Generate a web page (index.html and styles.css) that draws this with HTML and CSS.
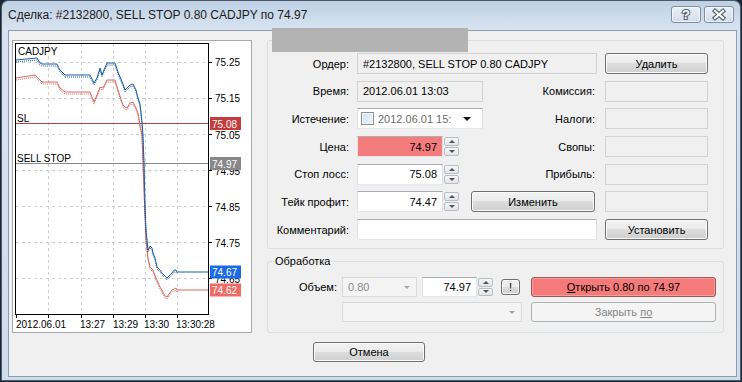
FILE: index.html
```html
<!DOCTYPE html>
<html lang="ru">
<head>
    <meta charset="UTF-8">
    <title>Сделка: #2132800</title>
    <link rel="stylesheet" href="styles.css">
</head>
<body>
<div class="window">
    <div class="titlebar">
        <span class="title">Сделка: #2132800, SELL STOP 0.80 CADJPY по 74.97</span>
        <div class="caption-btns">
            <span class="cap-btn">
                <svg width="28" height="15" viewBox="0 0 28 15">
                    <text x="14" y="12" text-anchor="middle" font-family="Liberation Sans, Arial, sans-serif" font-size="13" font-weight="bold" fill="#fff" stroke="#55626f" stroke-width="2.2" paint-order="stroke">?</text>
                </svg>
            </span>
            <span class="cap-btn">
                <svg width="28" height="15" viewBox="0 0 28 15">
                    <path d="M10 4 L18 11 M18 4 L10 11" stroke="#55626f" stroke-width="4.4" stroke-linecap="square"/>
                    <path d="M10 4 L18 11 M18 4 L10 11" stroke="#fff" stroke-width="2.2" stroke-linecap="square"/>
                </svg>
            </span>
        </div>
    </div>

    <div class="client">
        <div class="top-row">
            <!-- график -->
            <div class="chart">
                <svg width="238" height="291" viewBox="13 41 238 291" font-family="Liberation Sans, Arial, sans-serif" font-size="10">
                    <g stroke="#cfcfcf" stroke-dasharray="3 3" shape-rendering="crispEdges">
                        <line x1="16" y1="62.5" x2="208" y2="62.5"/>
                        <line x1="16" y1="98.5" x2="208" y2="98.5"/>
                        <line x1="16" y1="134.5" x2="208" y2="134.5"/>
                        <line x1="16" y1="170.5" x2="208" y2="170.5"/>
                        <line x1="16" y1="206.5" x2="208" y2="206.5"/>
                        <line x1="16" y1="242.5" x2="208" y2="242.5"/>
                        <line x1="16" y1="278.5" x2="208" y2="278.5"/>
                        <line x1="48.5" y1="44" x2="48.5" y2="314"/>
                        <line x1="81.5" y1="44" x2="81.5" y2="314"/>
                        <line x1="113.5" y1="44" x2="113.5" y2="314"/>
                        <line x1="145.5" y1="44" x2="145.5" y2="314"/>
                        <line x1="177.5" y1="44" x2="177.5" y2="314"/>
                    </g>
                    <g shape-rendering="crispEdges">
                        <line x1="16" y1="123.5" x2="208" y2="123.5" stroke="#a84848"/>
                        <line x1="16" y1="163.5" x2="208" y2="163.5" stroke="#8a8a8a"/>
                    </g>
                    <g fill="none">
                        <polyline stroke="#d66a62" points="16,78 35,75 40,80 42,82 57,82 60,88 65,92 90,92 92,97 94,102 97,95 100,87 103,88 107,80 115,80 118,90 123,105 125,107 127,108 130,103 133,102 136,108 138,113 140,125 142,135 143,163 145,215 146,240 148,258 150,267 153,270 156,278 160,287 163,292 165,296 167,297 169,294 172,290 174,289 176,288 177,290 208,290"/>
                        <polyline stroke="#d66a62" stroke-dasharray="1 1" transform="translate(0 2)" points="16,78 35,75 40,80 42,82 57,82 60,88 65,92 90,92 92,97 94,102 97,95 100,87 103,88 107,80 115,80 118,90 123,105 125,107 127,108 130,103 133,102 136,108 138,113 140,125 142,135 143,163 145,215 146,240 148,258 150,267 153,270 156,278 160,287 163,292 165,296 167,297 169,294 172,290 174,289 176,288 177,290"/>
                        <polyline stroke="#1d5ea8" points="16,60 37,58 40,63 42,64 57,64 60,70 65,75 90,75 92,79 94,83 97,78 100,68 102,75 104,70 107,63 115,63 118,72 123,84 125,90 127,88 130,85 133,84 136,90 138,98 140,104 142,122 143,137 144,163 145,207 146,230 148,250 150,246 152,248 153,253 155,258 157,267 160,270 162,273 165,276 167,278 169,276 172,273 174,270 176,270 177,272 208,272"/>
                        <polyline stroke="#1d5ea8" stroke-dasharray="1 1" transform="translate(0 2)" points="16,60 37,58 40,63 42,64 57,64 60,70 65,75 90,75 92,79 94,83 97,78 100,68 102,75 104,70 107,63 115,63 118,72 123,84 125,90 127,88 130,85 133,84 136,90 138,98 140,104 142,122 143,137 144,163 145,207 146,230 148,250 150,246 152,248 153,253 155,258 157,267 160,270 162,273 165,276 167,278 169,276 172,273 174,270 176,270 177,272"/>
                    </g>
                    <rect x="15.5" y="43.5" width="193" height="271" fill="none" stroke="#000" shape-rendering="crispEdges"/>
                    <g stroke="#000" shape-rendering="crispEdges">
                        <line x1="208" y1="62.5" x2="212" y2="62.5"/>
                        <line x1="208" y1="98.5" x2="212" y2="98.5"/>
                        <line x1="208" y1="134.5" x2="212" y2="134.5"/>
                        <line x1="208" y1="170.5" x2="212" y2="170.5"/>
                        <line x1="208" y1="206.5" x2="212" y2="206.5"/>
                        <line x1="208" y1="242.5" x2="212" y2="242.5"/>
                        <line x1="208" y1="278.5" x2="212" y2="278.5"/>
                        <line x1="16.5" y1="314" x2="16.5" y2="318"/>
                        <line x1="48.5" y1="314" x2="48.5" y2="318"/>
                        <line x1="81.5" y1="314" x2="81.5" y2="318"/>
                        <line x1="113.5" y1="314" x2="113.5" y2="318"/>
                        <line x1="145.5" y1="314" x2="145.5" y2="318"/>
                        <line x1="177.5" y1="314" x2="177.5" y2="318"/>
                    </g>
                    <g fill="#000">
                        <text x="18" y="55">CADJPY</text>
                        <text x="17" y="122">SL</text>
                        <text x="17" y="162">SELL STOP</text>
                        <text x="215" y="66">75.25</text>
                        <text x="215" y="102">75.15</text>
                        <text x="215" y="138.5">75.05</text>
                        <text x="215" y="174.5">74.95</text>
                        <text x="215" y="210.5">74.85</text>
                        <text x="215" y="246.5">74.75</text>
                        <text x="215" y="282.5">74.65</text>
                        <text x="16" y="328">2012.06.01</text>
                        <text x="80" y="328">13:27</text>
                        <text x="113" y="328">13:29</text>
                        <text x="144" y="328">13:30</text>
                        <text x="176" y="328">13:30:28</text>
                    </g>
                    <rect x="210" y="117" width="31" height="13" fill="#c63b3b"/>
                    <text x="212" y="127.5" fill="#fff">75.08</text>
                    <rect x="210" y="157" width="31" height="13" fill="#878787"/>
                    <text x="212" y="167.5" fill="#fff">74.97</text>
                    <rect x="210" y="265.5" width="31" height="13" fill="#1a6be6"/>
                    <text x="212" y="276" fill="#fff">74.67</text>
                    <rect x="210" y="283.5" width="31" height="13" fill="#f06a66"/>
                    <text x="212" y="294" fill="#fff">74.62</text>
                </svg>
            </div>

            <div class="groups">
                <div class="group">
                    <div class="redacted"></div>
                    <div class="form-grid">
                        <span class="lbl">Ордер:</span>
                        <div class="field">#2132800, SELL STOP 0.80 CADJPY</div>
                        <button class="btn">Удалить</button>

                        <span class="lbl">Время:</span>
                        <div class="cell">
                            <div class="field w-short">2012.06.01 13:03</div>
                            <span class="side-lbl">Комиссия:</span>
                        </div>
                        <div class="field"></div>

                        <span class="lbl">Истечение:</span>
                        <div class="cell">
                            <div class="datepick">
                                <span class="chk"></span>
                                <span class="date-text">2012.06.01 15:</span>
                                <span class="drop-arrow"></span>
                            </div>
                            <span class="side-lbl">Налоги:</span>
                        </div>
                        <div class="field"></div>

                        <span class="lbl">Цена:</span>
                        <div class="cell">
                            <div class="spin-field">
                                <div class="field edit price">74.97</div>
                                <div class="spinner"><span class="up"></span><span class="down"></span></div>
                            </div>
                            <span class="side-lbl">Свопы:</span>
                        </div>
                        <div class="field"></div>

                        <span class="lbl">Стоп лосс:</span>
                        <div class="cell">
                            <div class="spin-field">
                                <div class="field edit">75.08</div>
                                <div class="spinner"><span class="up"></span><span class="down"></span></div>
                            </div>
                            <span class="side-lbl">Прибыль:</span>
                        </div>
                        <div class="field"></div>

                        <span class="lbl">Тейк профит:</span>
                        <div class="cell">
                            <div class="spin-field">
                                <div class="field edit">74.47</div>
                                <div class="spinner"><span class="up"></span><span class="down"></span></div>
                            </div>
                            <button class="btn btn-modify">Изменить</button>
                        </div>
                        <div class="field"></div>

                        <span class="lbl">Комментарий:</span>
                        <div class="field edit"></div>
                        <button class="btn">Установить</button>
                    </div>
                </div>

                <fieldset class="proc">
                    <legend>Обработка</legend>
                    <div class="proc-grid">
                        <span class="lbl">Объем:</span>
                        <div class="cell">
                            <div class="combo w-vol"><span>0.80</span><span class="combo-arrow"></span></div>
                            <div class="spin-field small">
                                <div class="field edit">74.97</div>
                                <div class="spinner"><span class="up"></span><span class="down"></span></div>
                            </div>
                            <button class="btn btn-bang">!</button>
                        </div>
                        <button class="btn btn-open"><u>О</u>ткрыть 0.80 по 74.97</button>

                        <span></span>
                        <div class="combo"><span></span><span class="combo-arrow"></span></div>
                        <button class="btn btn-wide" disabled>Закрыть <u>по</u></button>
                    </div>
                </fieldset>
            </div>
        </div>

        <div class="bottom-row">
            <button class="btn btn-cancel">Отмена</button>
        </div>
    </div>
</div>
</body>
</html>
```

FILE: styles.css
```css
* {
    box-sizing: border-box;
}
body {
    margin: 0;
    width: 742px;
    height: 382px;
    overflow: hidden;
    background: #1d2835;
    font-family: "Liberation Sans", Arial, sans-serif;
    font-size: 11px;
    color: #000;
}

/* Окно */
.window {
    margin: 1px 0 0 2px;
    width: 738px;
    height: 379px;
    border-radius: 6px 6px 0 0;
    background: linear-gradient(#bfd0e5, #d7e3f1 28px, #cfdcec);
    box-shadow: 0 0 0 1px #4d5a69;
}
.titlebar {
    height: 29px;
    display: flex;
    justify-content: space-between;
    align-items: flex-start;
    padding: 0 6px;
}
.title {
    margin-top: 7px;
    font-size: 12px;
    line-height: 15px;
    color: #1b1b1b;
}
.caption-btns {
    display: flex;
    gap: 3px;
    margin-top: 5px;
}
.cap-btn {
    width: 30px;
    height: 17px;
    border: 1px solid #7f8fa3;
    border-radius: 3px;
    background: linear-gradient(#eaf0f7, #d2dcea);
    box-shadow: inset 0 0 0 1px rgba(255, 255, 255, 0.6);
    display: flex;
    align-items: center;
    justify-content: center;
}
.cap-btn svg {
    display: block;
}

.client {
    margin: 0 3px 0 6px;
    height: 347px;
    border: 1px solid #8d9db1;
    background: #f0f0f0;
    padding: 9px 0 0 3px;
}
.top-row {
    display: flex;
    gap: 15px;
    height: 293px;
}

/* График */
.chart {
    width: 240px;
    height: 293px;
    background: #fff;
    border: 1px solid #a8a8a8;
}
.chart svg {
    display: block;
}

/* Группы */
.groups {
    width: 457px;
    display: flex;
    flex-direction: column;
}
.group {
    position: relative;
    height: 209px;
    border: 1px solid #d5dfe5;
    border-radius: 3px;
    padding-top: 12px;
}
.redacted {
    position: absolute;
    left: 4px;
    top: -13px;
    width: 196px;
    height: 24px;
    background: #b3b3b3;
}
.form-grid {
    display: grid;
    grid-template-columns: 81px 240px 103px;
    grid-auto-rows: 21px;
    column-gap: 8px;
    row-gap: 6.7px;
}
.lbl {
    align-self: center;
    text-align: right;
    white-space: nowrap;
}
.cell {
    display: flex;
    align-items: center;
}
.side-lbl {
    flex: 1;
    text-align: right;
    padding-right: 2px;
}

.field {
    height: 21px;
    border: 1px solid #d3d3d3;
    background: #f0f0f0;
    padding: 0 5px;
    display: flex;
    align-items: center;
    white-space: nowrap;
    overflow: hidden;
}
.field.edit {
    background: #fff;
    border-color: #abadb3 #dbdfe6 #e3e9ef #e2e3ea;
    justify-content: flex-end;
}
.field.price {
    background: #f47c7c;
}
.w-short {
    width: 126px;
}

.datepick {
    width: 126px;
    height: 21px;
    display: flex;
    align-items: center;
    background: #fff;
    border: 1px solid;
    border-color: #abadb3 #dbdfe6 #e3e9ef #e2e3ea;
    padding-left: 3px;
}
.chk {
    width: 13px;
    height: 13px;
    border: 1px solid #8e8f8f;
    background: linear-gradient(135deg, #cfe2f5, #eef5fc);
    box-shadow: inset 0 0 0 1px #f4f8fc;
}
.date-text {
    margin-left: 4px;
    color: #6d6d6d;
}
.drop-arrow {
    margin-left: auto;
    margin-right: 11px;
    border-left: 4px solid transparent;
    border-right: 4px solid transparent;
    border-top: 4px solid #111;
}

.spin-field {
    width: 103px;
    height: 21px;
    display: flex;
}
.spin-field .field {
    flex: 1;
}
.spin-field.small {
    width: 72px;
    height: 20px;
    margin-left: 5px;
}
.spin-field.small .field {
    height: 20px;
}
.spinner {
    width: 17px;
    display: flex;
    flex-direction: column;
    gap: 1px;
    padding: 1px;
}
.spinner span {
    flex: 1;
    border: 1px solid #b9bec6;
    border-radius: 2px;
    background: linear-gradient(#f6f6f6, #e2e4e8);
    display: flex;
    align-items: center;
    justify-content: center;
}
.spinner span::before {
    content: "";
    border-left: 3px solid transparent;
    border-right: 3px solid transparent;
}
.spinner .up::before {
    border-bottom: 3px solid #4d5158;
}
.spinner .down::before {
    border-top: 3px solid #4d5158;
}

/* Кнопки */
.btn {
    font: inherit;
    color: #000;
    height: 21px;
    padding: 0;
    border: 1px solid #707070;
    border-radius: 3px;
    background: linear-gradient(#f2f2f2 0%, #ebebeb 49%, #dddddd 50%, #cfcfcf 100%);
    box-shadow: inset 0 0 0 1px #fbfbfb;
}
.btn-modify {
    width: 124px;
    margin-left: auto;
    margin-right: 2px;
}
.btn-open {
    height: 20px;
    width: 185px;
    justify-self: end;
    background: #f57b7b;
    border-color: #9c5757;
    box-shadow: inset 0 0 0 1px #f89d9d;
}
.btn-wide {
    height: 20px;
    width: 185px;
    justify-self: end;
}
.btn:disabled {
    color: #858585;
    border-color: #adb2b5;
    background: #f4f4f4;
    box-shadow: none;
}
.btn-bang {
    width: 19px;
    height: 16px;
    margin-left: 7px;
    font-size: 11px;
}
.btn-cancel {
    width: 112px;
    height: 20px;
}

/* Обработка */
.proc {
    margin: 6px 0 0;
    padding: 0;
    border: 1px solid #d5dfe5;
    border-radius: 3px;
}
.proc legend {
    margin-left: 6px;
    padding: 0 1px;
    line-height: 13px;
}
.proc-grid {
    display: grid;
    grid-template-columns: 69px 180px 189px;
    grid-auto-rows: 20px;
    column-gap: 5px;
    row-gap: 5px;
    padding: 9px 0 10px;
}
.combo {
    height: 20px;
    border: 1px solid #d9d9d9;
    background: #f4f4f4;
    color: #8a8a8a;
    display: flex;
    align-items: center;
    justify-content: space-between;
    padding: 0 6px 0 5px;
}
.w-vol {
    width: 75px;
}
.combo-arrow {
    border-left: 3px solid transparent;
    border-right: 3px solid transparent;
    border-top: 3px solid #a6a6a6;
}

.bottom-row {
    margin-top: 9px;
    padding-left: 301px;
}
```
